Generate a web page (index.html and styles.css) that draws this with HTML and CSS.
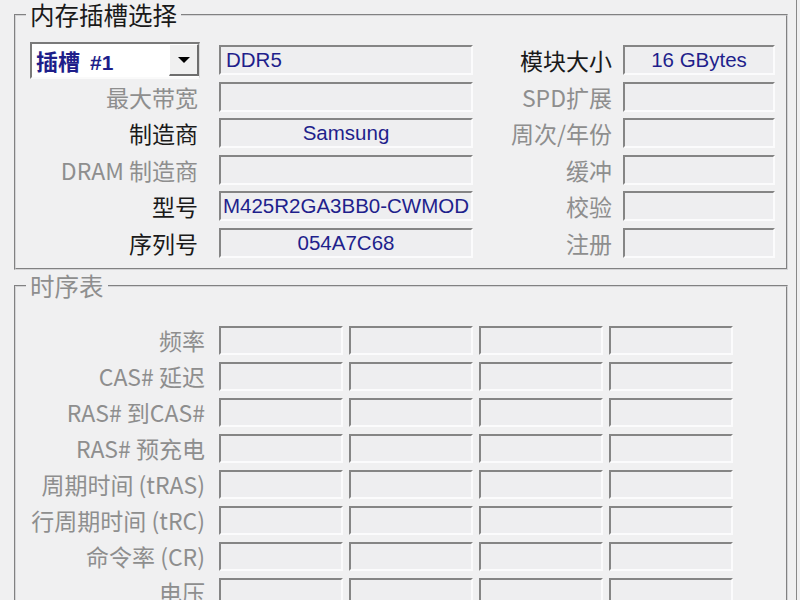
FILE: index.html
```html
<!DOCTYPE html>
<html lang="zh-CN">
<head>
  <meta charset="UTF-8">
  <meta name="viewport" content="width=device-width, initial-scale=1.0">
  <title>SPD</title>
  <link rel="stylesheet" href="styles.css">
</head>
<body>
  <div class="tab-page">
    <fieldset class="group">
      <legend class="group-title">内存插槽选择</legend>
      <div class="slot-grid">
        <div class="combo">
          <span class="combo-text">插槽<span class="combo-num">#1</span></span>
          <span class="combo-btn"><span class="arrow"></span></span>
        </div>
        <div class="field value start">DDR5</div>
        <div class="label mid">模块大小</div>
        <div class="field value">16 GBytes</div>

        <div class="label off">最大带宽</div>
        <div class="field"></div>
        <div class="label mid off">SPD扩展</div>
        <div class="field"></div>

        <div class="label">制造商</div>
        <div class="field value">Samsung</div>
        <div class="label mid off">周次/年份</div>
        <div class="field"></div>

        <div class="label off">DRAM 制造商</div>
        <div class="field"></div>
        <div class="label mid off">缓冲</div>
        <div class="field"></div>

        <div class="label">型号</div>
        <div class="field value">M425R2GA3BB0-CWMOD</div>
        <div class="label mid off">校验</div>
        <div class="field"></div>

        <div class="label">序列号</div>
        <div class="field value">054A7C68</div>
        <div class="label mid off">注册</div>
        <div class="field"></div>
      </div>
    </fieldset>

    <fieldset class="group timings">
      <legend class="group-title off">时序表</legend>
      <div class="timing-grid">
        <div class="label off">频率</div>
        <div class="field"></div><div class="field"></div><div class="field"></div><div class="field"></div>

        <div class="label off">CAS# 延迟</div>
        <div class="field"></div><div class="field"></div><div class="field"></div><div class="field"></div>

        <div class="label off">RAS# 到CAS#</div>
        <div class="field"></div><div class="field"></div><div class="field"></div><div class="field"></div>

        <div class="label off">RAS# 预充电</div>
        <div class="field"></div><div class="field"></div><div class="field"></div><div class="field"></div>

        <div class="label off">周期时间 (tRAS)</div>
        <div class="field"></div><div class="field"></div><div class="field"></div><div class="field"></div>

        <div class="label off">行周期时间 (tRC)</div>
        <div class="field"></div><div class="field"></div><div class="field"></div><div class="field"></div>

        <div class="label off">命令率 (CR)</div>
        <div class="field"></div><div class="field"></div><div class="field"></div><div class="field"></div>

        <div class="label off">电压</div>
        <div class="field"></div><div class="field"></div><div class="field"></div><div class="field"></div>
      </div>
    </fieldset>
  </div>
</body>
</html>
```

FILE: styles.css
```css
html, body {
  margin: 0;
  height: 600px;
  overflow: hidden;
}
body {
  background: #f0f0f1;
  font-family: "Noto Sans CJK SC", sans-serif;
  color: #1a1a1a;
}
.tab-page {
  width: 796px;
  height: 600px;
  border-right: 1px solid #888;
}

/* etched group boxes */
.group {
  margin: 0 0 0 14px;
  width: 774px;
  box-sizing: border-box;
  border: 2px groove #d4d4d6;
  padding: 15px 0 10px 14px;
}
.group-title {
  margin-left: -4px;
  padding: 0 4px;
  font-size: 24.5px;
  line-height: 30px;
}
.timings {
  margin-top: 1px;
  padding-top: 25px;
}

.slot-grid {
  display: grid;
  grid-template-columns: 189px 254px 150px 152px;
  grid-auto-rows: 30px;
  row-gap: 6.6px;
  align-items: center;
}
.timing-grid {
  display: grid;
  grid-template-columns: 183px repeat(4, 124px);
  grid-auto-rows: 29px;
  column-gap: 6px;
  row-gap: 7px;
  align-items: center;
}

.label {
  text-align: right;
  padding-right: 21px;
  font-size: 23px;
  line-height: 30px;
  white-space: nowrap;
}
.label.mid {
  padding-right: 11px;
}
.timing-grid .label {
  padding-right: 8px;
}
.off {
  color: #8e8e8e;
}

/* sunken read-only boxes */
.field {
  box-sizing: border-box;
  height: 100%;
  background: #eeeef0;
  border-top: 2px solid #858585;
  border-left: 2px solid #858585;
  border-right: 2px solid #fbfbfc;
  border-bottom: 2px solid #fbfbfc;
}
.value {
  display: flex;
  align-items: center;
  justify-content: center;
  overflow: hidden;
  white-space: nowrap;
  font-family: "Liberation Sans", Arial, sans-serif;
  font-size: 20.5px;
  color: #1f1f8c;
}
.value.start {
  justify-content: flex-start;
  padding-left: 5px;
}

/* slot selector */
.combo {
  width: 170px;
  height: 37px;
  box-sizing: border-box;
  display: flex;
  align-items: center;
  background: #fff;
  border-top: 2px solid #7a7a7a;
  border-left: 2px solid #7a7a7a;
  border-right: 1px solid #d8d8d8;
  border-bottom: 2px solid #fafafa;
}
.combo-text {
  flex: 1;
  padding-left: 4px;
  font-size: 22px;
  font-weight: bold;
  color: #1e1e8a;
}
.combo-num {
  padding-left: 10px;
  font-family: "Liberation Sans", Arial, sans-serif;
  font-size: 21px;
}
.combo-btn {
  width: 30px;
  height: 32px;
  box-sizing: border-box;
  display: flex;
  align-items: center;
  justify-content: center;
  background: #f0f0f0;
  border-top: 1px solid #fff;
  border-left: 1px solid #fff;
  border-right: 2px solid #6e6e6e;
  border-bottom: 2px solid #6e6e6e;
}
.arrow {
  width: 0;
  height: 0;
  border-left: 6.5px solid transparent;
  border-right: 6.5px solid transparent;
  border-top: 6px solid #000;
}
```
